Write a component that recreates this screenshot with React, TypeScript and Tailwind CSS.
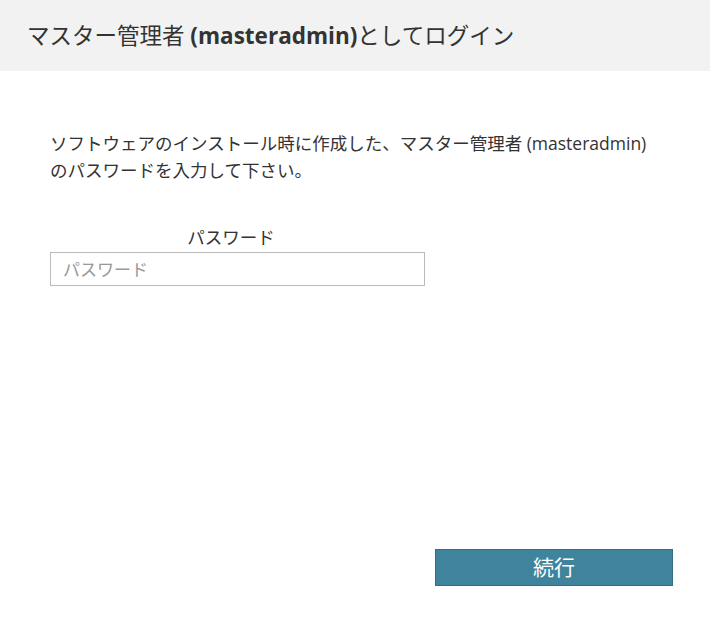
import React from "react";

const font = { fontFamily: '"Open Sans", "Noto Sans CJK JP", sans-serif' };

export default function App() {
	return (
		<div className="w-[710px] h-[623px] bg-white text-[#333]" style={font}>
			<div className="h-[71px] bg-[#f2f2f2] flex items-center px-[27px]">
				<h1 className="text-[22.5px] font-normal">
					マスター管理者 <span className="font-bold">(masteradmin)</span>としてログイン
				</h1>
			</div>
			<div className="px-[50px] pt-[59px]">
				<p className="text-[17.5px] leading-[27px]">
					ソフトウェアのインストール時に作成した、マスター管理者 (masteradmin)
					<br />
					のパスワードを入力して下さい。
				</p>
				<div className="mt-[40px] w-[375px]">
					<div className="w-[362px] text-center text-[17.5px] leading-[27px]">パスワード</div>
					<input
						type="password"
						placeholder="パスワード"
						className="block mt-[1px] w-[375px] h-[34px] border border-[#bbb] px-[12px] text-[17px] placeholder:text-[#999] outline-none"
					/>
				</div>
			</div>
			<div className="flex justify-end pr-[37px] mt-[263px]">
				<button className="w-[238px] h-[37px] bg-[#40839d] border border-[#336e85] text-white text-[21px]">
					続行
				</button>
			</div>
		</div>
	);
}
